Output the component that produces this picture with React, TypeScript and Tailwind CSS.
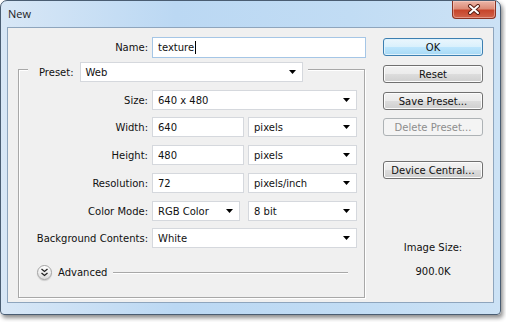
import type { ReactNode } from "react";

function Arrow() {
  return (
    <svg width="7" height="4" viewBox="0 0 7 4" className="shrink-0" aria-hidden="true">
      <path d="M0 0H7L3.5 4Z" fill="#000" />
    </svg>
  );
}

function Select({ value, className }: { value: string; className: string }) {
  return (
    <div className={`flex h-[20px] items-center justify-between border border-[#d5d8dd] bg-white pl-[5px] pr-[6px] ${className}`}>
      <span>{value}</span>
      <Arrow />
    </div>
  );
}

function Input({ value, className }: { value: string; className: string }) {
  return (
    <div className={`flex h-[20px] items-center border border-[#d5d8dd] bg-white pl-[5px] ${className}`}>
      {value}
    </div>
  );
}

function Row({ label, className, children }: { label: string; className: string; children: ReactNode }) {
  return (
    <div className={`flex h-[20px] items-center ${className}`}>
      <span className="w-[129px] text-right">{label}</span>
      <div className="ml-[4px] flex">{children}</div>
    </div>
  );
}

function Button({ children, variant = "normal", className = "" }: { children: ReactNode; variant?: "normal" | "default" | "disabled"; className?: string }) {
  const look =
    variant === "default"
      ? "border-[#3c7fb1] bg-[linear-gradient(to_bottom,#eaf6fd_0%,#d9f0fc_50%,#bee6fd_50%,#a7d9f5_100%)] shadow-[inset_0_0_0_1px_#dff2fc]"
      : variant === "disabled"
        ? "border-[#adb2b5] bg-[#f4f4f4] text-[#8d8d8d]"
        : "border-[#707070] bg-[linear-gradient(to_bottom,#f2f2f2_0%,#ebebeb_50%,#dddddd_50%,#cfcfcf_100%)] shadow-[inset_0_0_0_1px_#fcfcfc]";
  return (
    <div className={`flex h-[18px] w-[100px] items-center justify-center rounded-[3px] border ${look} ${className}`}>
      {children}
    </div>
  );
}

function CloseButton() {
  return (
    <div className="mr-[4px] flex h-[18px] w-[44px] items-center justify-center rounded-b-[4px] border border-t-0 border-[#8a3323] bg-[linear-gradient(to_bottom,#ecb6a8_0%,#dc8c78_45%,#c7452b_55%,#d0644b_100%)] shadow-[inset_0_0_0_1px_rgba(255,220,210,0.45)]">
      <svg width="14" height="11" viewBox="0 0 14 11" aria-hidden="true">
        <path d="M3 2L11 9M11 2L3 9" stroke="#5a1e14" strokeWidth="4" strokeLinecap="round" />
        <path d="M3 2L11 9M11 2L3 9" stroke="#fff" strokeWidth="2" strokeLinecap="round" />
      </svg>
    </div>
  );
}

function AdvancedIcon() {
  return (
    <div className="flex h-[15px] w-[15px] items-center justify-center rounded-full border border-[#a3a3a3] bg-[linear-gradient(to_bottom,#ffffff,#dcdcdc)] shadow-[0_1px_1px_rgba(0,0,0,0.15)]">
      <svg width="9" height="9" viewBox="0 0 9 9" aria-hidden="true">
        <path d="M1.5 1L4.5 3.5L7.5 1M1.5 5L4.5 7.5L7.5 5" fill="none" stroke="#222" strokeWidth="1.3" />
      </svg>
    </div>
  );
}

export default function App() {
  return (
    <div className="h-[322px] w-[506px] overflow-hidden bg-white font-['DejaVu_Sans',Verdana,sans-serif] text-[10px] text-[#111]">
      <div className="flex h-[315px] w-[501px] flex-col rounded-t-[7px] rounded-b-[4px] border border-[#4a5d72] bg-[linear-gradient(to_right,#d8e7f6,#bbd8f3_35%,#c1dcf4_70%,#cce2f5)] shadow-[2px_3px_4px_rgba(0,0,0,0.45)]">
        <div className="flex h-[26px] shrink-0 items-start justify-between">
          <span className="ml-[7px] mt-[5px] font-['Open_Sans',sans-serif] text-[11px] text-[#1c1c1c]">New</span>
          <CloseButton />
        </div>

        <div className="mx-[6px] flex h-[276px] border border-[#8ea5bd] bg-[#f0f0f0]">
          <div className="w-[358px] pt-[9px]">
            <div className="flex h-[21px] items-center">
              <span className="w-[140px] text-right">Name:</span>
              <div className="ml-[4px] flex h-[21px] w-[214px] items-center border border-[#a5c6e6] bg-white pl-[5px]">
                texture
                <span className="ml-px h-[13px] w-px bg-black" />
              </div>
            </div>

            <div className="ml-[10px] mt-[11px] flex h-[229px] w-[347px] flex-col border border-[#a8a8a8] shadow-[1px_1px_0_#fff,inset_1px_1px_0_#fff]">
              <div className="-mt-[8px] ml-[9px] flex w-fit items-center bg-[#f0f0f0] pl-[11px] pr-[5px]">
                <span>Preset:</span>
                <Select value="Web" className="ml-[6px] w-[223px]" />
              </div>

              <Row label="Size:" className="mt-[8px]">
                <Select value="640 x 480" className="w-[205px]" />
              </Row>
              <Row label="Width:" className="mt-[7px]">
                <Input value="640" className="w-[92px]" />
                <Select value="pixels" className="ml-[4px] w-[109px]" />
              </Row>
              <Row label="Height:" className="mt-[8px]">
                <Input value="480" className="w-[92px]" />
                <Select value="pixels" className="ml-[4px] w-[109px]" />
              </Row>
              <Row label="Resolution:" className="mt-[8px]">
                <Input value="72" className="w-[92px]" />
                <Select value="pixels/inch" className="ml-[4px] w-[109px]" />
              </Row>
              <Row label="Color Mode:" className="mt-[8px]">
                <Select value="RGB Color" className="w-[88px]" />
                <Select value="8 bit" className="ml-[8px] w-[109px]" />
              </Row>
              <Row label="Background Contents:" className="mt-[7px]">
                <Select value="White" className="w-[205px]" />
              </Row>

              <div className="mt-[17px] flex h-[15px] items-center">
                <div className="ml-[18px]">
                  <AdvancedIcon />
                </div>
                <span className="ml-[6px]">Advanced</span>
                <div className="ml-[6px] mr-[16px] h-px flex-1 bg-[#a8a8a8] shadow-[0_1px_0_#fff]" />
              </div>
            </div>
          </div>

          <div className="ml-[17px] flex w-[100px] flex-col pt-[10px]">
            <Button variant="default">OK</Button>
            <Button className="mt-[9px]">Reset</Button>
            <Button className="mt-[9px]">Save Preset...</Button>
            <Button variant="disabled" className="mt-[8px]">Delete Preset...</Button>
            <Button className="mt-[25px]">Device Central...</Button>
            <div className="mt-[62px] text-center leading-[14px]">Image Size:</div>
            <div className="mt-[10px] text-center leading-[14px]">900.0K</div>
          </div>
        </div>
      </div>
    </div>
  );
}
